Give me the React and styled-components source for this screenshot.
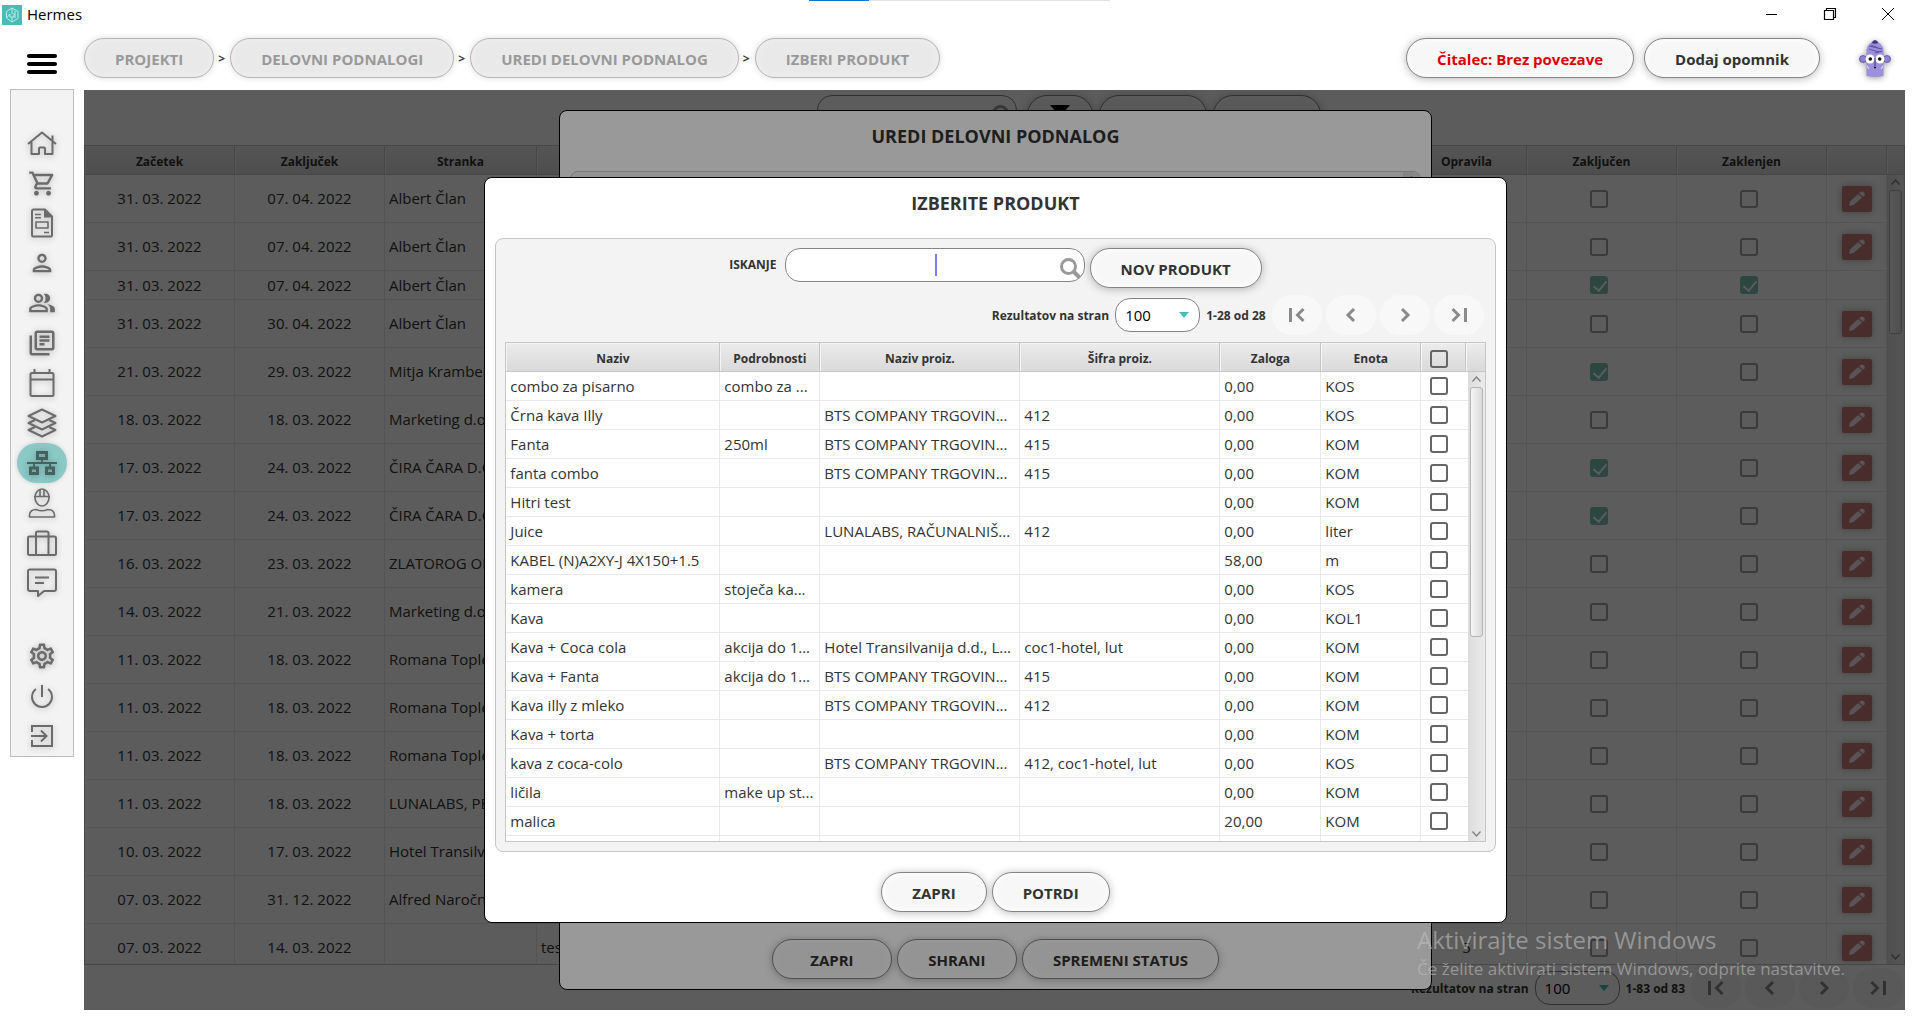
import React from "react";
import styled, { createGlobalStyle, css } from "styled-components";
import {
  MdOutlineShoppingCart,
  MdOutlinePerson,
  MdOutlinePeopleAlt,
  MdOutlineLibraryBooks,
  MdOutlineSettings,
} from "react-icons/md";

const breadcrumbs = [
  "PROJEKTI",
  "DELOVNI PODNALOGI",
  "UREDI DELOVNI PODNALOG",
  "IZBERI PRODUKT",
];

// kind: "" = both open, "c" = closed, "cl" = closed and locked
const orders = [
  ["31. 03. 2022", "07. 04. 2022", "Albert Član", ""],
  ["31. 03. 2022", "07. 04. 2022", "Albert Član", ""],
  ["31. 03. 2022", "07. 04. 2022", "Albert Član", "cl"],
  ["31. 03. 2022", "30. 04. 2022", "Albert Član", ""],
  ["21. 03. 2022", "29. 03. 2022", "Mitja Kramberger", "c"],
  ["18. 03. 2022", "18. 03. 2022", "Marketing d.o.o.", ""],
  ["17. 03. 2022", "24. 03. 2022", "ČIRA ČARA D.O.O.", "c"],
  ["17. 03. 2022", "24. 03. 2022", "ČIRA ČARA D.O.O.", "c"],
  ["16. 03. 2022", "23. 03. 2022", "ZLATOROG OPREMA", ""],
  ["14. 03. 2022", "21. 03. 2022", "Marketing d.o.o.", ""],
  ["11. 03. 2022", "18. 03. 2022", "Romana Toplek", ""],
  ["11. 03. 2022", "18. 03. 2022", "Romana Toplek", ""],
  ["11. 03. 2022", "18. 03. 2022", "Romana Toplek", ""],
  ["11. 03. 2022", "18. 03. 2022", "LUNALABS, PE", ""],
  ["10. 03. 2022", "17. 03. 2022", "Hotel Transilvanija", ""],
  ["07. 03. 2022", "31. 12. 2022", "Alfred Naročnik", ""],
  ["07. 03. 2022", "14. 03. 2022", "", "", "test", "5"],
];

const bts = "BTS COMPANY TRGOVIN...";
const products = [
  ["combo za pisarno", "combo za ...", "", "", "0,00", "KOS"],
  ["Črna kava Illy", "", bts, "412", "0,00", "KOS"],
  ["Fanta", "250ml", bts, "415", "0,00", "KOM"],
  ["fanta combo", "", bts, "415", "0,00", "KOM"],
  ["Hitri test", "", "", "", "0,00", "KOM"],
  ["Juice", "", "LUNALABS, RAČUNALNIŠ...", "412", "0,00", "liter"],
  ["KABEL (N)A2XY-J 4X150+1.5", "", "", "", "58,00", "m"],
  ["kamera", "stoječa ka...", "", "", "0,00", "KOS"],
  ["Kava", "", "", "", "0,00", "KOL1"],
  ["Kava + Coca cola", "akcija do 1...", "Hotel Transilvanija d.d., L...", "coc1-hotel, lut", "0,00", "KOM"],
  ["Kava + Fanta", "akcija do 1...", bts, "415", "0,00", "KOM"],
  ["Kava illy z mleko", "", bts, "412", "0,00", "KOM"],
  ["Kava + torta", "", "", "", "0,00", "KOM"],
  ["kava z coca-colo", "", bts, "412, coc1-hotel, lut", "0,00", "KOS"],
  ["ličila", "make up st...", "", "", "0,00", "KOM"],
  ["malica", "", "", "", "20,00", "KOM"],
  ["", "", "", "", "", ""],
];

const Line = ({ children, w = 2 }) => (
  <svg
    width="30"
    height="30"
    viewBox="0 0 30 30"
    fill="none"
    stroke="currentColor"
    strokeWidth={w}
    strokeLinejoin="round"
  >
    {children}
  </svg>
);

const HomeIcon = () => (
  <Line>
    <path d="M1 16L15 4.5L29 16M4.5 14V26H12V20.5Q12 19.5 13 19.5H17Q18 19.5 18 20.5V26H25.5V7.5" />
  </Line>
);

const InvoiceIcon = () => (
  <Line>
    <path d="M6 1.5H18L25 8.5V27Q25 28.5 24 28.5H6Q5 28.5 5 27V3Q5 1.5 6 1.5Z" />
    <path d="M17 2V9.5H25L18 2Z" fill="currentColor" stroke="none" />
    <path d="M8 6.5H14M8 9.8H14M17 24.5H22" strokeWidth="1.5" />
    <rect x="9" y="14" width="12" height="6" strokeWidth="1.6" />
  </Line>
);

const CalendarIcon = () => (
  <Line>
    <rect x="3.5" y="5" width="23" height="23" rx="1.5" />
    <path d="M3.5 11.5H26.5M7.5 1V5M22.5 1V5" />
  </Line>
);

const LayersIcon = () => (
  <Line>
    <path d="M15 1.5L28.5 8L15 14.5L1.5 8Z" />
    <path d="M8 12L1.5 15L15 21.5L28.5 15L22 12" />
    <path d="M8 19L1.5 22L15 28.5L28.5 22L22 19" />
  </Line>
);

const NetworkIcon = () => (
  <Line w={3}>
    <g strokeLinejoin="miter">
      <rect x="10.5" y="4.5" width="9" height="6" />
      <rect x="3.5" y="20" width="7" height="5.5" />
      <rect x="19.5" y="20" width="7" height="5.5" />
      <path d="M0 15H30M15 11V15M7 15V19M23 15V19" strokeWidth="1.8" />
    </g>
  </Line>
);

const WorkerIcon = () => (
  <Line w={1.6}>
    <ellipse cx="15" cy="9.5" rx="7" ry="8.5" />
    <path d="M7 8.5H23M13 8V2M17 8V2" />
    <path d="M2.5 29V27Q3 21.5 9 21.5Q15 24 21 21.5Q27 21.5 27.5 27V29Z" />
  </Line>
);

const CaseIcon = () => (
  <Line>
    <rect x="1" y="8.5" width="28" height="18.5" rx="1.5" />
    <path d="M9 27V5Q9 3.5 10.5 3.5H19.5Q21.5 3.5 21.5 5V27" />
  </Line>
);

const ChatIcon = () => (
  <Line>
    <path d="M3 1.5H27Q29 1.5 29 3.5V21Q29 23 27 23H17L11 28V23H3Q1 23 1 21V3.5Q1 1.5 3 1.5Z" />
    <path d="M8 9.5H22M8 15H17" />
  </Line>
);

const PowerIcon = () => (
  <Line>
    <path d="M9 8Q5 11 5 16A10 10 0 0 0 25 16Q25 11 21 8M15 4V16" />
  </Line>
);

const ExitIcon = () => (
  <Line>
    <path
      d="M5 11V5H25V25H5V19M4 15H19.5M14 9.5L19.5 15L14 20.5"
      strokeLinejoin="miter"
    />
  </Line>
);

const PencilIcon = () => (
  <svg width="18" height="16" viewBox="0 0 18 16" fill="currentColor">
    <path d="M1 15L2 10.5L10 3L14 6.5L5.5 14Z" />
    <path d="M11 2.2L12.5 1Q14.5 0 16 1.5Q17.5 3 16.5 4.5L15 5.7Z" />
  </svg>
);

const SearchIcon = () => (
  <svg width="22" height="22" viewBox="0 0 22 22" fill="none" stroke="#999" strokeWidth="3">
    <circle cx="9.5" cy="9.5" r="7" />
    <path d="M14 14L20.5 20.5" strokeWidth="4" />
  </svg>
);

const ArrowIcon = ({ dir }) => (
  <svg width="20" height="16" viewBox="0 0 20 16" fill="none" stroke="#8a8a8a" strokeWidth="3">
    {dir === "first" && <path d="M3.5 1V15M16.5 2L10.5 8L16.5 14" />}
    {dir === "prev" && <path d="M13 2L7 8L13 14" />}
    {dir === "next" && <path d="M7 2L13 8L7 14" />}
    {dir === "last" && <path d="M16.5 1V15M3.5 2L9.5 8L3.5 14" />}
  </svg>
);

const Avatar = () => (
  <svg width="34" height="40" viewBox="0 0 34 40">
    <circle cx="5" cy="21" r="3.5" fill="#8f82cf" stroke="#4a3f91" strokeWidth=".7" />
    <circle cx="29" cy="21" r="3.5" fill="#8f82cf" stroke="#4a3f91" strokeWidth=".7" />
    <path d="M8.5 38V12Q10 4 17 4Q24 4 25.5 12V38Q17 40 8.5 38Z" fill="#9b90d9" />
    <path d="M13.5 5Q15 2 17 2Q19 2 20.5 5Q17 6.5 13.5 5Z" fill="#40367f" />
    <path d="M11 8L24 11M11 11L21 14M13 7L20 10M17 15L24 13" stroke="#5a4fa3" fill="none" />
    <circle cx="12" cy="21" r="4.5" fill="#fff" />
    <circle cx="22" cy="21" r="4.5" fill="#fff" />
    <circle cx="12.3" cy="21" r="1.8" fill="#111" />
    <circle cx="21.7" cy="21" r="1.8" fill="#111" />
    <path d="M17 20V28" stroke="#40367f" />
    <path d="M16 29.5H18" stroke="#111" strokeWidth="1.5" />
    <path d="M9 28L11 31M25 28L23 31" stroke="#fff" strokeWidth=".8" />
  </svg>
);

const LogoIcon = () => (
  <svg width="20" height="20" viewBox="0 0 20 20" fill="none" stroke="#c4efec" strokeWidth=".9">
    <rect width="20" height="20" fill="#48bdb7" stroke="none" />
    <path d="M10 3L4.5 6.5V13L10 17L16 13.5V6.5L10 3V9M4.5 13L8 9V12H12V8M10 12V17M13 6V13" />
  </svg>
);

const Chevron = ({ down }) => (
  <svg width="9" height="6" viewBox="0 0 9 6" fill="none" stroke="#808080" strokeWidth="1.3">
    <path d={down ? "M.5 .5L4.5 5L8.5 .5" : "M.5 5.5L4.5 1L8.5 5.5"} />
  </svg>
);

const menu = [
  ["Domov", <HomeIcon />],
  ["Prodaja", <MdOutlineShoppingCart size={29} />],
  ["Dokumenti", <InvoiceIcon />],
  ["Stranka", <MdOutlinePerson size={28} />],
  ["Stranke", <MdOutlinePeopleAlt size={28} />],
  ["Knjige", <MdOutlineLibraryBooks size={30} />],
  ["Koledar", <CalendarIcon />],
  ["Sloji", <LayersIcon />],
  ["Projekti", <NetworkIcon />],
  ["Delavci", <WorkerIcon />],
  ["Posli", <CaseIcon />],
  ["Sporočila", <ChatIcon />],
];

const systemMenu = [
  ["Nastavitve", <MdOutlineSettings size={30} />],
  ["Izklop", <PowerIcon />],
  ["Odjava", <ExitIcon />],
];

function Scrollbar({ thumb }) {
  return (
    <Rail>
      <Chevron />
      <Thumb $size={thumb} />
      <Chevron down />
    </Rail>
  );
}

function Pager({ id, range }) {
  return (
    <PagerRow>
      <label htmlFor={id}>Rezultatov na stran</label>
      <SelectWrap>
        <select id={id} defaultValue="100">
          <option>100</option>
        </select>
      </SelectWrap>
      <span>{range}</span>
      <PagerButtons>
        <PagerButton aria-label="Prva"><ArrowIcon dir="first" /></PagerButton>
        <PagerButton aria-label="Prejšnja"><ArrowIcon dir="prev" /></PagerButton>
        <PagerButton aria-label="Naslednja"><ArrowIcon dir="next" /></PagerButton>
        <PagerButton aria-label="Zadnja"><ArrowIcon dir="last" /></PagerButton>
      </PagerButtons>
    </PagerRow>
  );
}

function OrdersTable() {
  return (
    <TableFrame>
      <Table>
        <colgroup>
          <col width="150" />
          <col width="150" />
          <col width="152" />
          <col />
          <col width="120" />
          <col width="150" />
          <col width="150" />
          <col width="60" />
          <col width="17" />
        </colgroup>
        <thead>
          <tr>
            <th>Začetek</th>
            <th>Zaključek</th>
            <th>Stranka</th>
            <th />
            <th>Opravila</th>
            <th>Zaključen</th>
            <th>Zaklenjen</th>
            <th />
            <th />
          </tr>
        </thead>
        <tbody>
          {orders.map(([start, end, client, kind, name, tasks], i) => (
            <Row key={i} $tall={kind !== "cl"}>
              <Cell $center>{start}</Cell>
              <Cell $center>{end}</Cell>
              <Cell>{client}</Cell>
              <Cell>{name}</Cell>
              <Cell $center>{tasks}</Cell>
              <CheckCell>
                <Check type="checkbox" aria-label="Zaključen" defaultChecked={kind !== ""} $faded />
              </CheckCell>
              <CheckCell>
                <Check type="checkbox" aria-label="Zaklenjen" defaultChecked={kind === "cl"} $faded />
              </CheckCell>
              <CheckCell $wide>
                {kind !== "cl" && (
                  <EditButton aria-label="Uredi">
                    <PencilIcon />
                  </EditButton>
                )}
              </CheckCell>
              <Cell />
            </Row>
          ))}
        </tbody>
      </Table>
      <Scrollbar thumb="144px" />
    </TableFrame>
  );
}

function ProductsTable() {
  return (
    <TableFrame>
      <Table>
        <colgroup>
          <col width="214" />
          <col width="100" />
          <col width="200" />
          <col width="200" />
          <col width="101" />
          <col width="100" />
          <col width="45" />
          <col width="21" />
        </colgroup>
        <thead>
          <tr>
            <th>Naziv</th>
            <th>Podrobnosti</th>
            <th>Naziv proiz.</th>
            <th>Šifra proiz.</th>
            <th>Zaloga</th>
            <th>Enota</th>
            <th>
              <Check type="checkbox" aria-label="Izberi vse" $left />
            </th>
            <th />
          </tr>
        </thead>
        <tbody>
          {products.map((product, i) => (
            <Row key={i}>
              {product.map((value, j) => (
                <Cell key={j}>{value}</Cell>
              ))}
              <Cell colSpan={2} $center>
                {product[0] && <Check type="checkbox" aria-label={product[0]} $left />}
              </Cell>
            </Row>
          ))}
        </tbody>
      </Table>
      <Scrollbar thumb="250px" />
    </TableFrame>
  );
}

function App() {
  return (
    <Page>
      <GlobalStyle />
      <LoadingBar>
        <div />
      </LoadingBar>
      <TitleBar>
        <LogoIcon />
        <span>Hermes</span>
        <WindowButtons>
          <button aria-label="Pomanjšaj">
            <svg width="12" height="14" stroke="#000"><path d="M0 7.5H11" /></svg>
          </button>
          <button aria-label="Obnovi">
            <svg width="14" height="14" fill="none" stroke="#000" strokeWidth="1.2">
              <path d="M1.5 3.5H10.5V12.5H1.5ZM3.5 3.5V1.5H12.5V10.5H10.5" />
            </svg>
          </button>
          <button aria-label="Zapri okno">
            <svg width="14" height="14" stroke="#000"><path d="M1 1L13 13M13 1L1 13" /></svg>
          </button>
        </WindowButtons>
      </TitleBar>
      <Body>
        <Side>
          <Burger aria-label="Meni">
            <i />
            <i />
            <i />
          </Burger>
          <Nav>
            {menu.map(([label, icon]) => (
              <NavLink key={label} href="#" aria-label={label} $active={label === "Projekti"}>
                {icon}
              </NavLink>
            ))}
            <NavGap />
            {systemMenu.map(([label, icon]) => (
              <NavLink key={label} href="#" aria-label={label}>
                {icon}
              </NavLink>
            ))}
          </Nav>
        </Side>
        <Main>
          <Header>
            <Crumbs>
              {breadcrumbs.map((crumb, i) => (
                <React.Fragment key={crumb}>
                  {i > 0 && <span>&gt;</span>}
                  <Pill disabled>{crumb}</Pill>
                </React.Fragment>
              ))}
            </Crumbs>
            <Actions>
              <Pill $danger>Čitalec: Brez povezave</Pill>
              <Pill>Dodaj opomnik</Pill>
            </Actions>
            <AvatarButton aria-label="Profil">
              <Avatar />
            </AvatarButton>
          </Header>
          <Content>
            <PageTools>
              <SearchBox $width="200px">
                <input aria-label="Iskanje nalogov" />
                <SearchIcon />
              </SearchBox>
              <FilterButton aria-label="Filter">
                <svg width="20" height="20"><path d="M0 0H20L12 9V20H8V9Z" /></svg>
              </FilterButton>
              <ToolButton aria-label="Nov nalog" />
              <ToolButton aria-label="Izvoz" />
            </PageTools>
            <OrdersTable />
            <PageFooter>
              <Pager id="orders-size" range="1-83 od 83" />
            </PageFooter>

            <Overlay $inset="20px">
              <Modal $width="48%" role="dialog" aria-labelledby="order-title">
                <h2 id="order-title">UREDI DELOVNI PODNALOG</h2>
                <Panel $flush>
                  <Scrollbar thumb="250px" />
                </Panel>
                <ModalButtons>
                  <Pill $wide>ZAPRI</Pill>
                  <Pill $wide>SHRANI</Pill>
                  <Pill $wide>SPREMENI STATUS</Pill>
                </ModalButtons>
              </Modal>
            </Overlay>

            <Overlay $inset="87px">
              <Modal $width="56.2%" role="dialog" aria-labelledby="product-title">
                <h2 id="product-title">IZBERITE PRODUKT</h2>
                <Panel>
                  <Tools>
                    <label htmlFor="search">ISKANJE</label>
                    <SearchBox $width="300px">
                      <input id="search" />
                      <Caret />
                      <SearchIcon />
                    </SearchBox>
                    <Pill>NOV PRODUKT</Pill>
                  </Tools>
                  <Pager id="products-size" range="1-28 od 28" />
                  <ProductsTable />
                </Panel>
                <ModalButtons>
                  <Pill>ZAPRI</Pill>
                  <Pill>POTRDI</Pill>
                </ModalButtons>
              </Modal>
            </Overlay>
          </Content>
        </Main>
      </Body>
      <Watermark>
        <strong>Aktivirajte sistem Windows</strong>
        <span>Če želite aktivirati sistem Windows, odprite nastavitve.</span>
      </Watermark>
    </Page>
  );
}

const GlobalStyle = createGlobalStyle`
  * {
    box-sizing: border-box;
  }
  body {
    margin: 0;
    background: white;
    color: #333;
    font-family: "Open Sans", "Noto Sans", sans-serif;
    font-size: 15px;
  }
  button,
  input,
  select {
    font: inherit;
    color: inherit;
    margin: 0;
  }
  button {
    border: none;
    background: none;
    padding: 0;
  }
  svg {
    display: block;
  }
`;

const Page = styled.div`
  position: relative;
  display: flex;
  flex-direction: column;
  height: 100vh;
  overflow: hidden;
`;

const LoadingBar = styled.div`
  position: absolute;
  top: 0;
  left: 809px;
  width: 301px;
  height: 1px;
  background: #e2e2e2;
  div {
    width: 20%;
    height: 1px;
    background: #0078d7;
  }
`;

const TitleBar = styled.div`
  display: flex;
  align-items: center;
  gap: 5px;
  height: 29px;
  padding-left: 2px;
  color: black;
  span {
    padding-bottom: 1px;
  }
`;

const WindowButtons = styled.div`
  display: flex;
  margin-left: auto;
  padding-right: 3px;
  button {
    width: 58px;
    height: 29px;
    padding-bottom: 2px;
    display: flex;
    align-items: center;
    justify-content: center;
  }
`;

const Body = styled.div`
  flex: 1;
  display: flex;
  min-height: 0;
`;

const Side = styled.aside`
  width: 84px;
  padding-left: 10px;
`;

const Burger = styled.button`
  width: 64px;
  height: 60px;
  padding-top: 10px;
  display: flex;
  flex-direction: column;
  align-items: center;
  justify-content: center;
  gap: 4px;
  i {
    width: 30px;
    height: 4px;
    border-radius: 2px;
    background: black;
  }
`;

const Nav = styled.nav`
  width: 64px;
  display: flex;
  flex-direction: column;
  align-items: center;
  padding-top: 33px;
  background: #f3f3f3;
  border: 1px solid #bdbdbd;
`;

const NavLink = styled.a`
  width: 50px;
  height: 40px;
  border-radius: 20px;
  display: flex;
  align-items: center;
  justify-content: center;
  color: #6b6b6b;
  svg {
    filter: drop-shadow(0 1px 3px rgba(0, 0, 0, 0.25));
  }
  ${(props) =>
    props.$active &&
    css`
      background: #8ac9c6;
      box-shadow: 0 0 5px rgba(0, 0, 0, 0.15);
      color: #47615f;
    `}
`;

const NavGap = styled.div`
  height: 33px;
`;

const Main = styled.main`
  flex: 1;
  min-width: 0;
  display: flex;
  flex-direction: column;
  padding: 0 15px 15px 0;
`;

const Header = styled.header`
  display: flex;
  height: 61px;
  padding-top: 9px;
  align-items: flex-start;
`;

const Crumbs = styled.div`
  display: flex;
  align-items: center;
  gap: 4px;
  span {
    width: 8px;
    font-size: 12px;
    font-weight: bold;
  }
`;

const Actions = styled.div`
  display: flex;
  gap: 10px;
  margin-left: auto;
`;

const AvatarButton = styled.button`
  width: 34px;
  margin: 0 13px 0 38px;
  filter: drop-shadow(0 1px 3px rgba(0, 0, 0, 0.4));
`;

const Pill = styled.button`
  height: 40px;
  min-width: ${(props) => (props.$wide ? "120px" : "0")};
  padding: 2px 30px 0;
  border: 1px solid #858585;
  border-radius: 20px;
  background: #f7f7f7;
  box-shadow: 0 1px 8px rgba(0, 0, 0, 0.28), inset 0 0 8px white;
  color: ${(props) => (props.$danger ? "#dd0000" : "#333")};
  font-weight: bold;
  white-space: nowrap;
  &:disabled {
    border-color: #b5b5b5;
    background: #e9e9e9;
    box-shadow: 0 0 6px rgba(0, 0, 0, 0.14), inset 0 0 6px #f0f0f0;
    color: #999;
  }
`;

const Content = styled.section`
  position: relative;
  flex: 1;
  min-height: 0;
  display: flex;
  flex-direction: column;
  overflow: hidden;
`;

const PageTools = styled.div`
  display: flex;
  justify-content: center;
  align-items: flex-start;
  gap: 6px;
  height: 55px;
  padding: 5px 0 0 148px;
`;

const FilterButton = styled(Pill)`
  width: 66px;
  margin-left: 4px;
  padding: 0 22px;
`;

const ToolButton = styled(Pill)`
  width: 108px;
`;

const SearchBox = styled.div`
  position: relative;
  width: ${(props) => props.$width};
  input {
    width: 100%;
    height: 34px;
    display: block;
    padding: 0 32px;
    border: 1px solid #858585;
    border-radius: 15px;
    background: white;
    outline: none;
    text-align: center;
  }
  > svg {
    position: absolute;
    right: 4px;
    top: 9px;
  }
`;

const Caret = styled.i`
  position: absolute;
  left: 50%;
  top: 6px;
  width: 2px;
  height: 22px;
  background: #7d7df5;
`;

const TableFrame = styled.div`
  position: relative;
  flex: 1;
  min-height: 0;
  overflow: hidden;
  background: white;
  border: 1px solid #c6c6c6;
`;

const Table = styled.table`
  width: 100%;
  table-layout: fixed;
  border-collapse: separate;
  border-spacing: 0;
  th {
    height: 29px;
    padding: 3px 0 0;
    border-right: 1px solid #c6c6c6;
    border-bottom: 1px solid #c6c6c6;
    background: linear-gradient(#ececec, #d9d9d9);
    box-shadow: inset 1px 1px 0 #f4f4f4;
    font-size: 12px;
    font-weight: bold;
    vertical-align: middle;
  }
  th:last-child {
    border-right: none;
  }
`;

const Cell = styled.td`
  padding: 0 0 1px ${(props) => (props.$center ? "0" : "4px")};
  border-right: 1px solid #e9e9e9;
  border-bottom: 1px solid #e9e9e9;
  line-height: 20px;
  text-align: ${(props) => (props.$center ? "center" : "left")};
  vertical-align: middle;
  white-space: nowrap;
  overflow: hidden;
`;

const CheckCell = styled(Cell)`
  padding: 0 ${(props) => (props.$wide ? "0" : "6px")} 0 0;
`;

const Row = styled.tr`
  height: ${(props) => (props.$tall ? "48px" : "29px")};
`;

const Check = styled.input`
  appearance: none;
  display: block;
  width: 18px;
  height: 18px;
  margin: ${(props) => (props.$left ? "0 0 0 9px" : "0 auto")};
  border: 2px solid #666;
  border-radius: 3px;
  opacity: ${(props) => (props.$faded ? 0.6 : 1)};
  &:checked {
    border-color: #27a07e;
    background: #27a07e;
  }
  &:checked::after {
    content: "";
    display: block;
    width: 6px;
    height: 11px;
    margin: 0 4px;
    border: solid white;
    border-width: 0 2px 2px 0;
    transform: rotate(40deg);
  }
`;

const EditButton = styled.button`
  width: 30px;
  height: 26px;
  margin: 0 auto;
  display: flex;
  align-items: center;
  justify-content: center;
  border-radius: 2px;
  background: #cd7c7c;
  box-shadow: 0 0 6px rgba(0, 0, 0, 0.3);
  color: #f0f0f0;
`;

const Rail = styled.div`
  position: absolute;
  right: 0;
  top: 29px;
  bottom: 0;
  width: 17px;
  padding: 4px 2px;
  display: flex;
  flex-direction: column;
  align-items: center;
  background: linear-gradient(90deg, #dcdcdc, #ebebeb);
  svg:last-child {
    margin-top: auto;
  }
`;

const Thumb = styled.div`
  width: 13px;
  height: ${(props) => props.$size};
  margin-top: 5px;
  border: 1px solid #b3b3b3;
  border-radius: 3px;
  background: linear-gradient(90deg, #f5f5f5, #dadada);
`;

const PageFooter = styled.div`
  padding: 3px 0 2px;
`;

const PagerRow = styled.div`
  display: flex;
  align-items: center;
  justify-content: flex-end;
  gap: 6px;
  padding-right: 2px;
  font-size: 12px;
  font-weight: bold;
`;

const SelectWrap = styled.div`
  position: relative;
  select {
    appearance: none;
    width: 85px;
    height: 34px;
    display: block;
    padding: 0 9px;
    border: 1px solid #858585;
    border-radius: 15px;
    background: white;
    color: black;
    font-size: 15px;
    font-weight: normal;
  }
  &::after {
    content: "";
    position: absolute;
    right: 11px;
    top: 14px;
    border: 5px solid transparent;
    border-top: 6px solid #48bdb7;
    border-bottom: none;
    pointer-events: none;
  }
`;

const PagerButtons = styled.div`
  display: flex;
  gap: 4px;
`;

const PagerButton = styled.button`
  width: 50px;
  height: 40px;
  display: flex;
  align-items: center;
  justify-content: center;
  border-radius: 20px;
  background: #f8f8f8;
`;

const Overlay = styled.div`
  position: absolute;
  inset: 0;
  display: flex;
  justify-content: center;
  padding: ${(props) => props.$inset} 0 ${(props) => props.$inset} 2px;
  background: rgba(0, 0, 0, 0.4);
`;

const Modal = styled.div`
  width: ${(props) => props.$width};
  display: flex;
  flex-direction: column;
  padding: 0 10px;
  border: 1px solid black;
  border-radius: 8px;
  background: white;
  h2 {
    margin: 0 0 10px;
    font-size: 18px;
    line-height: 50px;
    text-align: center;
  }
`;

const Panel = styled.div`
  position: relative;
  flex: 1;
  min-height: 0;
  display: flex;
  flex-direction: column;
  gap: 7px;
  padding: 9px;
  border: 1px solid #c6c6c6;
  border-radius: 8px;
  background: #f3f3f3;
  overflow: hidden;
  ${(props) =>
    props.$flush &&
    css`
      ${Rail} {
        top: 0;
      }
    `}
`;

const Tools = styled.div`
  display: flex;
  align-items: flex-start;
  justify-content: center;
  gap: 5px;
  label {
    margin-right: 3px;
    font-size: 12px;
    line-height: 34px;
    font-weight: bold;
  }
`;

const ModalButtons = styled.div`
  display: flex;
  justify-content: center;
  gap: 5px;
  padding: 20px 0 10px;
`;

const Watermark = styled.div`
  position: absolute;
  right: 75px;
  bottom: 42px;
  display: flex;
  flex-direction: column;
  color: rgba(190, 190, 190, 0.6);
  pointer-events: none;
  strong {
    font-size: 24px;
    line-height: 30px;
    font-weight: normal;
  }
  span {
    font-size: 17px;
    line-height: 28px;
  }
`;

export default App;
